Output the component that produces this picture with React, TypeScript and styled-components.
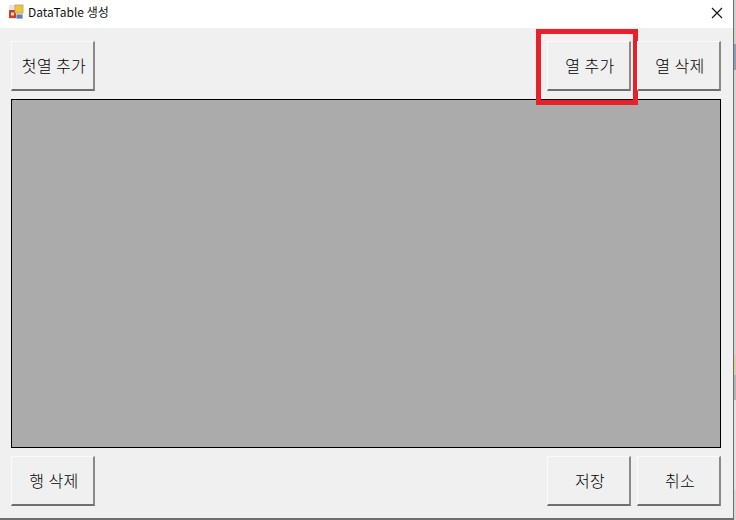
import React from "react";
import styled, { createGlobalStyle } from "styled-components";

const Global = createGlobalStyle`
  html, body { margin: 0; padding: 0; background: #d8d8d8; }
  #root { width: 736px; height: 520px; overflow: hidden; }
`;

const Screen = styled.div`
  display: flex;
  width: 736px;
  height: 520px;
  font-family: "Noto Sans CJK KR", "Liberation Sans", sans-serif;
`;

const Window = styled.div`
  display: flex;
  flex-direction: column;
  width: 734px;
  height: 520px;
  box-sizing: border-box;
  border-right: 1px solid #6e6e6e;
  border-bottom: 2px solid #6e6e6e;
  background: #f0f0f0;
`;

const TitleBar = styled.div`
  display: flex;
  align-items: center;
  height: 28px;
  flex: none;
  background: #fff;
  padding: 0 8px;
  gap: 4px;
`;

const IconSlot = styled.div`
  display: flex;
  margin-bottom: 4px;
`;

const TitleText = styled.span`
  flex: 1;
  font-size: 12px;
  line-height: 16px;
  color: #111;
  padding-bottom: 4px;
`;

const CloseButton = styled.div`
  display: flex;
  margin-right: 2px;
  margin-bottom: 3px;
`;

const Client = styled.div`
  display: flex;
  flex-direction: column;
  flex: 1;
  padding: 13px 12px 12px 11px;
  gap: 8px;
`;

const ButtonRow = styled.div`
  display: flex;
  justify-content: space-between;
  flex: none;
`;

const ButtonGroup = styled.div`
  display: flex;
  gap: 6px;
`;

const ActionButton = styled.div`
  position: relative;
  display: flex;
  align-items: center;
  justify-content: center;
  width: 84px;
  height: 50px;
  box-sizing: border-box;
  padding: 0 0 2px 3px;
  background: #f0f0f0;
  border-style: solid;
  border-width: 1px 2px 2px 1px;
  border-color: #fbfbfb #8a8a8a #6f6f6f #fbfbfb;
  font-size: 16px;
  font-weight: 300;
  letter-spacing: 0.4px;
  color: #000;
  white-space: pre;
`;

const Highlight = styled.div`
  position: absolute;
  left: -12px;
  top: -13px;
  width: 102px;
  height: 76px;
  box-sizing: border-box;
  border: 5px solid #e8202c;
  pointer-events: none;
`;

const GridArea = styled.div`
  flex: 1;
  background: #ababab;
  border: 1px solid #000;
`;

const Backdrop = styled.div`
  display: flex;
  flex-direction: column;
  width: 2px;
  height: 520px;
`;

const BackdropBand = styled.div<{ $h: number; $c: string }>`
  height: ${(p) => p.$h}px;
  background: ${(p) => p.$c};
`;

const bands: [number, string][] = [
  [44, "#cfcfcf"],
  [26, "#8e9bb0"],
  [285, "#d4d4d4"],
  [20, "#d9cf9f"],
  [25, "#b4b4b8"],
  [90, "#e2e2e2"],
  [30, "#d8d8d8"],
];

function AppIcon() {
  return (
    <svg width="16" height="16" viewBox="0 0 16 16">
      <rect x="1" y="1" width="14" height="14" fill="#e4e4e8" />
      <rect x="1" y="6" width="7" height="8" fill="#c8402e" />
      <rect x="3" y="8.5" width="3" height="3" fill="#f3d6c8" />
      <rect x="7" y="1" width="8" height="8" fill="#eec63c" stroke="#b9a45a" strokeWidth="0.8" />
      <rect x="8.5" y="10.5" width="6" height="4" fill="#5b80bd" />
    </svg>
  );
}

function CloseIcon() {
  return (
    <svg width="12" height="12" viewBox="0 0 12 12">
      <path d="M1 1L11 11M11 1L1 11" stroke="#111" strokeWidth="1.1" fill="none" />
    </svg>
  );
}

export default function App() {
  return (
    <>
      <Global />
      <Screen>
        <Window>
          <TitleBar>
            <IconSlot>
              <AppIcon />
            </IconSlot>
            <TitleText>DataTable 생성</TitleText>
            <CloseButton>
              <CloseIcon />
            </CloseButton>
          </TitleBar>
          <Client>
            <ButtonRow>
              <ActionButton>첫열 추가</ActionButton>
              <ButtonGroup>
                <ActionButton>
                  열 추가
                  <Highlight />
                </ActionButton>
                <ActionButton>열 삭제</ActionButton>
              </ButtonGroup>
            </ButtonRow>
            <GridArea />
            <ButtonRow>
              <ActionButton>행 삭제</ActionButton>
              <ButtonGroup>
                <ActionButton>저장</ActionButton>
                <ActionButton>취소</ActionButton>
              </ButtonGroup>
            </ButtonRow>
          </Client>
        </Window>
        <Backdrop>
          {bands.map(([h, c], i) => (
            <BackdropBand key={i} $h={h} $c={c} />
          ))}
        </Backdrop>
      </Screen>
    </>
  );
}
